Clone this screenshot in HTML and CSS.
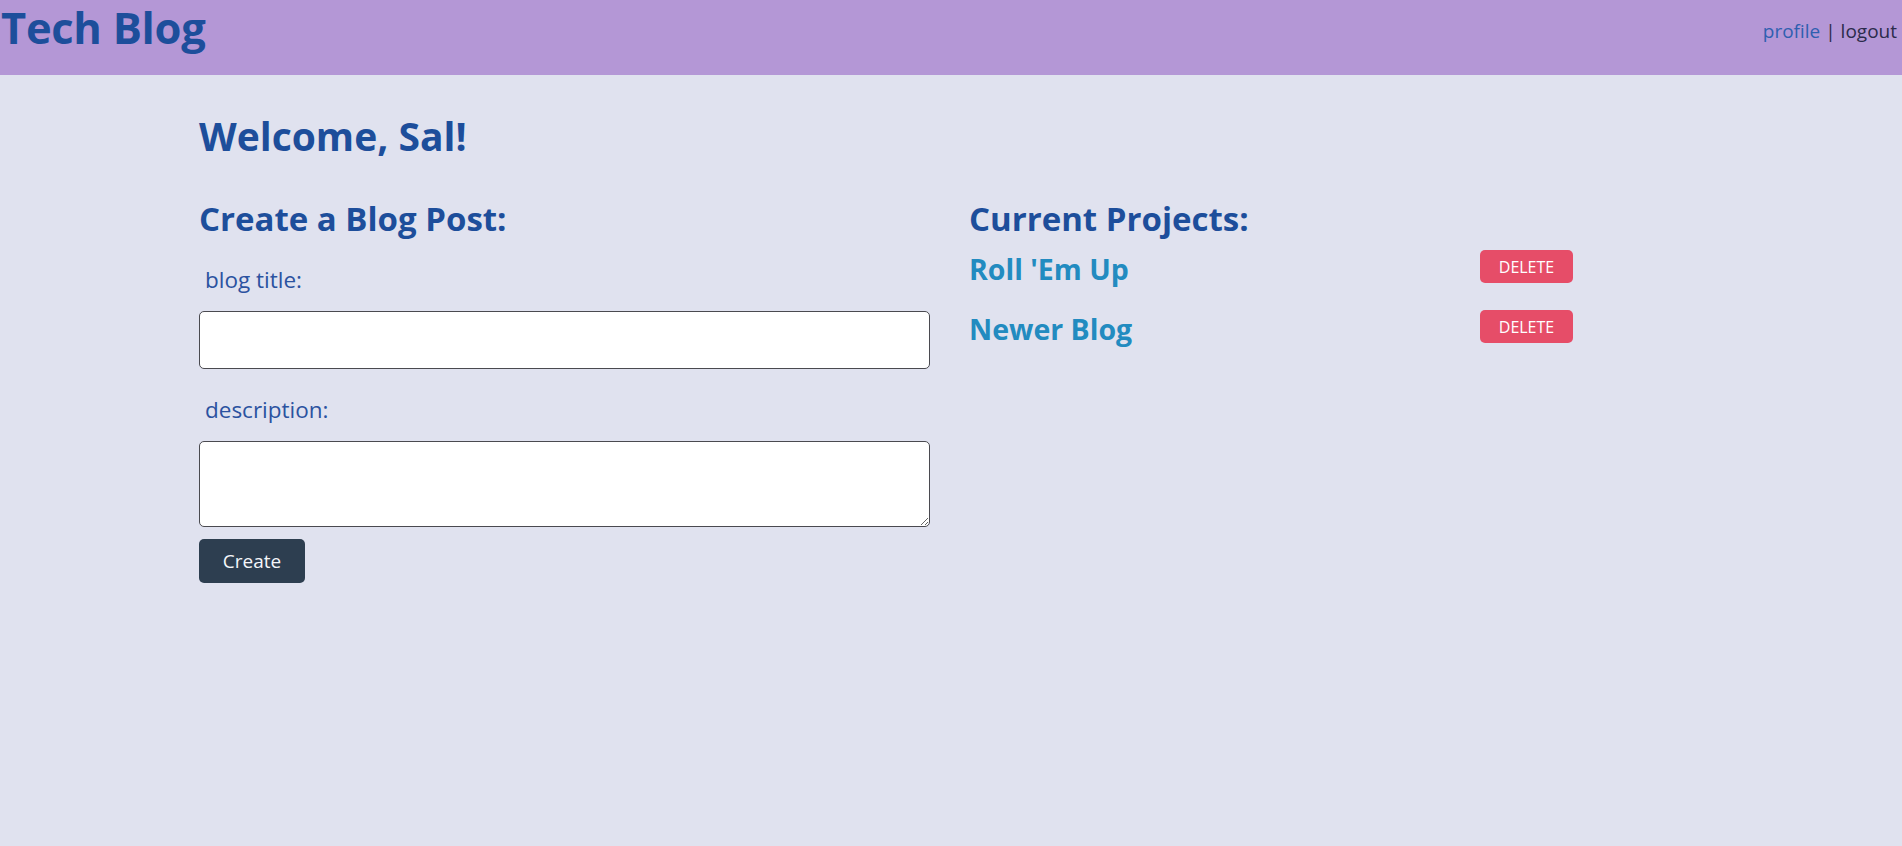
FILE: index.html
```html
<!DOCTYPE html>
<html lang="en">
<head>
<meta charset="utf-8">
<title>Tech Blog</title>
<link rel="stylesheet" href="styles.css">
</head>
<body>
<header class="topbar">
  <h1 class="brand">Tech Blog</h1>
  <nav class="nav"><a class="nav-profile" href="#">profile</a> | <a class="nav-logout" href="#">logout</a></nav>
</header>
<main class="container">
  <h1 class="welcome">Welcome, Sal!</h1>
  <div class="columns">
    <section class="col">
      <h2 class="section-title">Create a Blog Post:</h2>
      <form class="post-form">
        <label class="field-label" for="title">blog title:</label>
        <input class="field-input" id="title" type="text">
        <label class="field-label field-label-2" for="desc">description:</label>
        <textarea class="field-textarea" id="desc"></textarea>
        <button class="btn-create" type="button">Create</button>
      </form>
    </section>
    <section class="col">
      <h2 class="section-title">Current Projects:</h2>
      <ul class="projects">
        <li class="project"><a class="project-link" href="#">Roll 'Em Up</a><button class="btn-delete" type="button">DELETE</button></li>
        <li class="project"><a class="project-link" href="#">Newer Blog</a><button class="btn-delete" type="button">DELETE</button></li>
      </ul>
    </section>
  </div>
</main>
</body>
</html>
```

FILE: styles.css
```css
* { box-sizing: border-box; }
html, body { margin: 0; padding: 0; }
body {
  background: #e0e2ef;
  font-family: "Open Sans", "Noto Sans", sans-serif;
  color: #1d4e9b;
  min-height: 846px;
}
.topbar {
  background: #b497d6;
  height: 75px;
  display: flex;
  justify-content: space-between;
  align-items: flex-start;
  padding: 0 5px 0 1px;
}
.brand {
  margin: 6px 0 0 0;
  font-size: 43.5px;
  line-height: 1;
  font-weight: 700;
  color: #1d4e9b;
  letter-spacing: -0.3px;
}
.nav {
  margin-top: 19px;
  font-size: 19px;
  line-height: 24px;
  color: #2b2b4b;
}
.nav a { text-decoration: none; }
.nav-profile { color: #2f5fb0; }
.nav-logout { color: #2b2b4b; }
.container {
  max-width: 1504px;
  margin: 0 auto;
}
.welcome {
  margin: 37px 0 0 0;
  font-size: 39px;
  line-height: 47px;
  font-weight: 700;
  color: #1d4e9b;
}
.columns {
  display: grid;
  grid-template-columns: 731px 1fr;
  column-gap: 39px;
  margin-top: 40px;
}
.section-title {
  margin: 0;
  font-size: 33px;
  line-height: 40px;
  font-weight: 700;
  color: #1d4e9b;
}
.post-form {
  display: flex;
  flex-direction: column;
  align-items: flex-start;
}
.field-label {
  display: block;
  margin-top: 27px;
  padding-left: 6px;
  font-size: 22.5px;
  line-height: 28px;
  color: #2b52a0;
}
.field-input, .field-textarea {
  width: 731px;
  margin-top: 17px;
  border: 1px solid #4a4a50;
  border-radius: 5px;
  background: #fff;
  font-family: inherit;
  font-size: 18px;
}
.field-input { height: 58px; }
.field-textarea { height: 86px; display: block; resize: both; }
.btn-create {
  margin-top: 12px;
  width: 106px;
  height: 44px;
  background: #2d3e50;
  color: #f4f6fa;
  border: 0;
  border-radius: 5px;
  font-family: inherit;
  font-size: 19px;
  padding: 0;
}
.projects {
  list-style: none;
  margin: 11px 0 0 0;
  padding: 0;
  width: 604px;
  display: flex;
  flex-direction: column;
  gap: 27px;
}
.project {
  display: flex;
  justify-content: space-between;
  align-items: flex-start;
  height: 33px;
}
.project-link {
  font-size: 28.5px;
  line-height: 33px;
  padding-top: 3px;
  font-weight: 700;
  color: #228bc0;
  text-decoration: none;
}
.btn-delete {
  width: 93px;
  height: 33px;
  background: #e64d68;
  color: #fff;
  border: 0;
  border-radius: 5px;
  font-family: inherit;
  font-size: 16px;
  padding: 0;
}
```
